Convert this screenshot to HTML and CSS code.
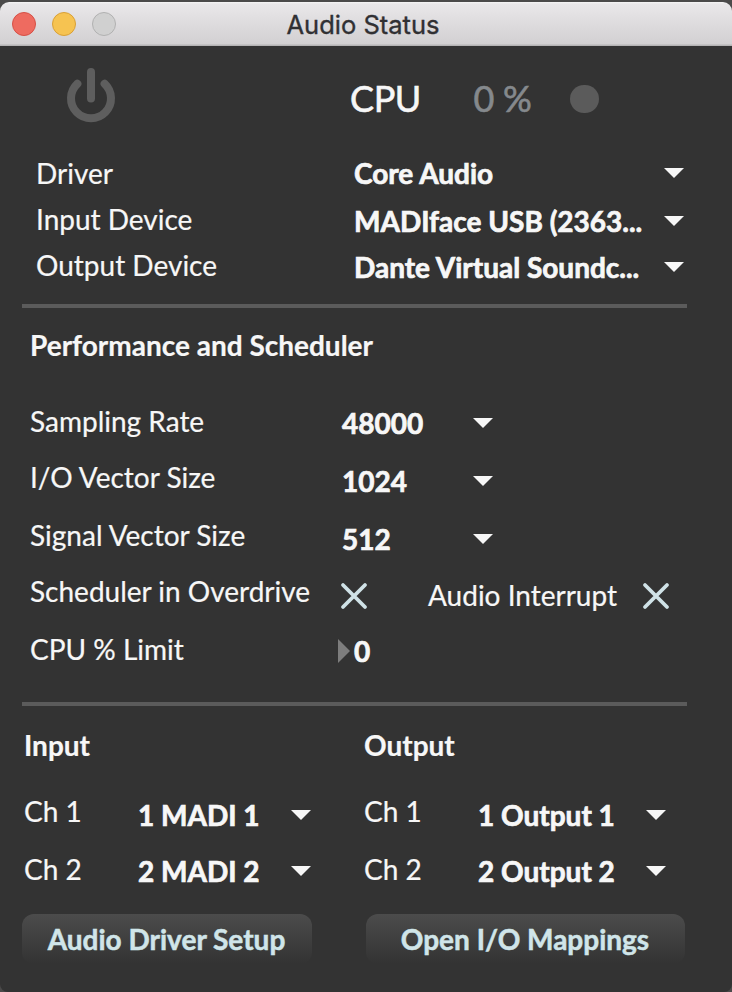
FILE: index.html
```html
<!DOCTYPE html>
<html lang="en">
<head>
<meta charset="utf-8">
<title>Audio Status</title>
<link rel="stylesheet" href="styles.css">
</head>
<body>
<div class="window">
  <header class="titlebar">
    <div class="lights"><i class="light close"></i><i class="light minimize"></i><i class="light zoom"></i></div>
    <h1 class="title">Audio Status</h1>
  </header>
  <main>
    <section class="status">
      <svg class="power" viewBox="0 0 50 56" width="50" height="56"><path d="M11.4 17.7A20 20 0 1 0 38.6 17.7M25 6V32.5"/></svg>
      <span class="cpu">CPU</span><span class="load">0 %</span><i class="lamp"></i>
    </section>
    <section class="devices">
      <div class="row"><span class="label">Driver</span><span class="menu"><b>Core Audio</b><i class="arrow"></i></span></div>
      <div class="row"><span class="label">Input Device</span><span class="menu low"><b>MADIface USB (2363...</b><i class="arrow"></i></span></div>
      <div class="row"><span class="label">Output Device</span><span class="menu low"><b>Dante Virtual Soundc...</b><i class="arrow"></i></span></div>
    </section>
    <hr>
    <section class="performance">
      <h2>Performance and Scheduler</h2>
      <div class="row r56"><span class="label">Sampling Rate</span><span class="menu low"><b>48000</b><i class="arrow"></i></span></div>
      <div class="row r58"><span class="label">I/O Vector Size</span><span class="menu lower"><b>1024</b><i class="arrow"></i></span></div>
      <div class="row r56"><span class="label">Signal Vector Size</span><span class="menu lower"><b>512</b><i class="arrow"></i></span></div>
      <div class="row r58"><span class="label">Scheduler in Overdrive</span>
        <span class="checks"><svg class="cross" viewBox="0 0 28 28" width="28" height="28"><path d="M3 3L25 25M25 3L3 25"/></svg><span class="interrupt">Audio Interrupt</span><svg class="cross" viewBox="0 0 28 28" width="28" height="28"><path d="M3 3L25 25M25 3L3 25"/></svg></span></div>
      <div class="row r56"><span class="label">CPU % Limit</span><span class="limit"><i class="stepper"></i><b>0</b></span></div>
    </section>
    <hr>
    <section class="channels">
      <div class="column">
        <h2>Input</h2>
        <div class="row r58"><span class="label">Ch 1</span><span class="menu lower"><b>1 MADI 1</b><i class="arrow"></i></span></div>
        <div class="row r58"><span class="label">Ch 2</span><span class="menu low"><b>2 MADI 2</b><i class="arrow"></i></span></div>
        <button class="setup">Audio Driver Setup</button>
      </div>
      <div class="column output">
        <h2>Output</h2>
        <div class="row r58"><span class="label">Ch 1</span><span class="menu lower"><b>1 Output 1</b><i class="arrow"></i></span></div>
        <div class="row r58"><span class="label">Ch 2</span><span class="menu low"><b>2 Output 2</b><i class="arrow"></i></span></div>
        <button class="mappings">Open I/O Mappings</button>
      </div>
    </section>
  </main>
</div>
</body>
</html>
```
FILE: styles.css
```css
* { box-sizing: border-box; }
html, body { margin: 0; height: 992px; overflow: hidden; }
body { background: #4b4a4a; padding-top: 2px; font: 28px/34px Lato, sans-serif; color: #f7f7f7; white-space: nowrap; -webkit-text-stroke: 0.2px currentColor; }
i { display: block; flex: none; }
b { font-weight: 700; -webkit-text-stroke: 0.7px currentColor; }

.window { height: 990px; background: #333; border-radius: 9px 9px 8px 8px; overflow: hidden; }
.titlebar { display: grid; grid-template-columns: 286.5px auto; height: 44px; background: linear-gradient(#f6f5f6 0, #e9e7e9 2px, #d2d0d2 42px, #b5b4b5 43px); }
.lights { display: flex; gap: 16px; padding: 10px 0 0 12px; }
.light { width: 24px; height: 24px; border-radius: 50%; border: 1px solid; }
.close { background: #ee6b60; border-color: #d65046; }
.minimize { background: #f6c351; border-color: #d9a036; }
.zoom { background: #d0d0d0; border-color: #b1b1b1; }
.title { margin: 0; padding-top: 6px; font: 400 25.5px/34px Inter, sans-serif; color: #303033; -webkit-text-stroke-width: 0.35px; }

.status { display: flex; height: 110px; padding: 22px 0 0 66px; }
.power { flex: none; margin-top: -2px; fill: none; stroke: #5e5e5e; stroke-width: 8; stroke-linecap: round; overflow: visible; }
.cpu, .load { font-size: 36px; line-height: 44px; padding-top: 8px; -webkit-text-stroke-width: 0.6px; }
.cpu { width: 123.5px; margin-left: 234px; letter-spacing: -0.4px; }
.load { width: 96.5px; color: #85898d; word-spacing: -0.5px; }
.lamp { width: 28.5px; height: 28.5px; margin-top: 16.5px; border-radius: 50%; background: #5b5b5b; }

.row { display: grid; align-items: start; height: 46px; }
.r56 { height: 56px; }
.r58 { height: 58px; }
.menu { display: flex; align-items: center; justify-content: space-between; height: 34px; }
.low { margin-top: 2px; }
.lower { margin-top: 4px; }
.arrow { width: 20px; height: 10px; background: #f7f7f7; clip-path: polygon(0 0, 100% 0, 50% 100%); }
hr { width: 664.5px; height: 4px; margin: 0 0 0 22px; border: 0; background: #5b5b5b; }
h2 { margin: 0; font-size: 28px; line-height: 34px; font-weight: 700; }

.devices { height: 148px; padding-left: 36px; }
.devices .row { grid-template-columns: 318px 330px; }

.performance { height: 394px; padding: 20px 0 0 30px; }
.performance h2 { margin-bottom: 42px; }
.performance .row { grid-template-columns: 312px auto; }
.performance .menu { width: 151px; }
.checks { display: flex; align-items: center; height: 34px; margin-top: 4px; }
.checks .cross { margin: 2px 0 0 -2px; }
.interrupt { width: 216px; margin-left: 60px; }
.cross { flex: none; fill: none; stroke: #d0e2e7; stroke-width: 3.8; stroke-linecap: round; }
.limit { display: flex; align-items: center; gap: 4px; height: 34px; margin: 2px 0 0 -4px; }
.stepper { width: 12px; height: 24px; background: #7d7d7d; clip-path: polygon(0 0, 100% 50%, 0 100%); }

.channels { display: grid; grid-template-columns: 340px auto; padding: 22px 0 0 24px; }
.channels h2 { margin-bottom: 32px; }
.channels .row { grid-template-columns: 114px 173px; }
.channels .output .row { grid-template-columns: 114px 188px; }
button { display: block; height: 50px; padding: 0 1px 1px 0; margin-top: 4px; border: 0; border-radius: 12px; background: linear-gradient(#4c4c4c, #333); color: #d0e5e9; font: 700 28px/34px Lato, sans-serif; -webkit-text-stroke: 0.5px currentColor; }
.setup { width: 290px; margin-left: -2px; }
.mappings { width: 319px; margin-left: 2px; }
```
